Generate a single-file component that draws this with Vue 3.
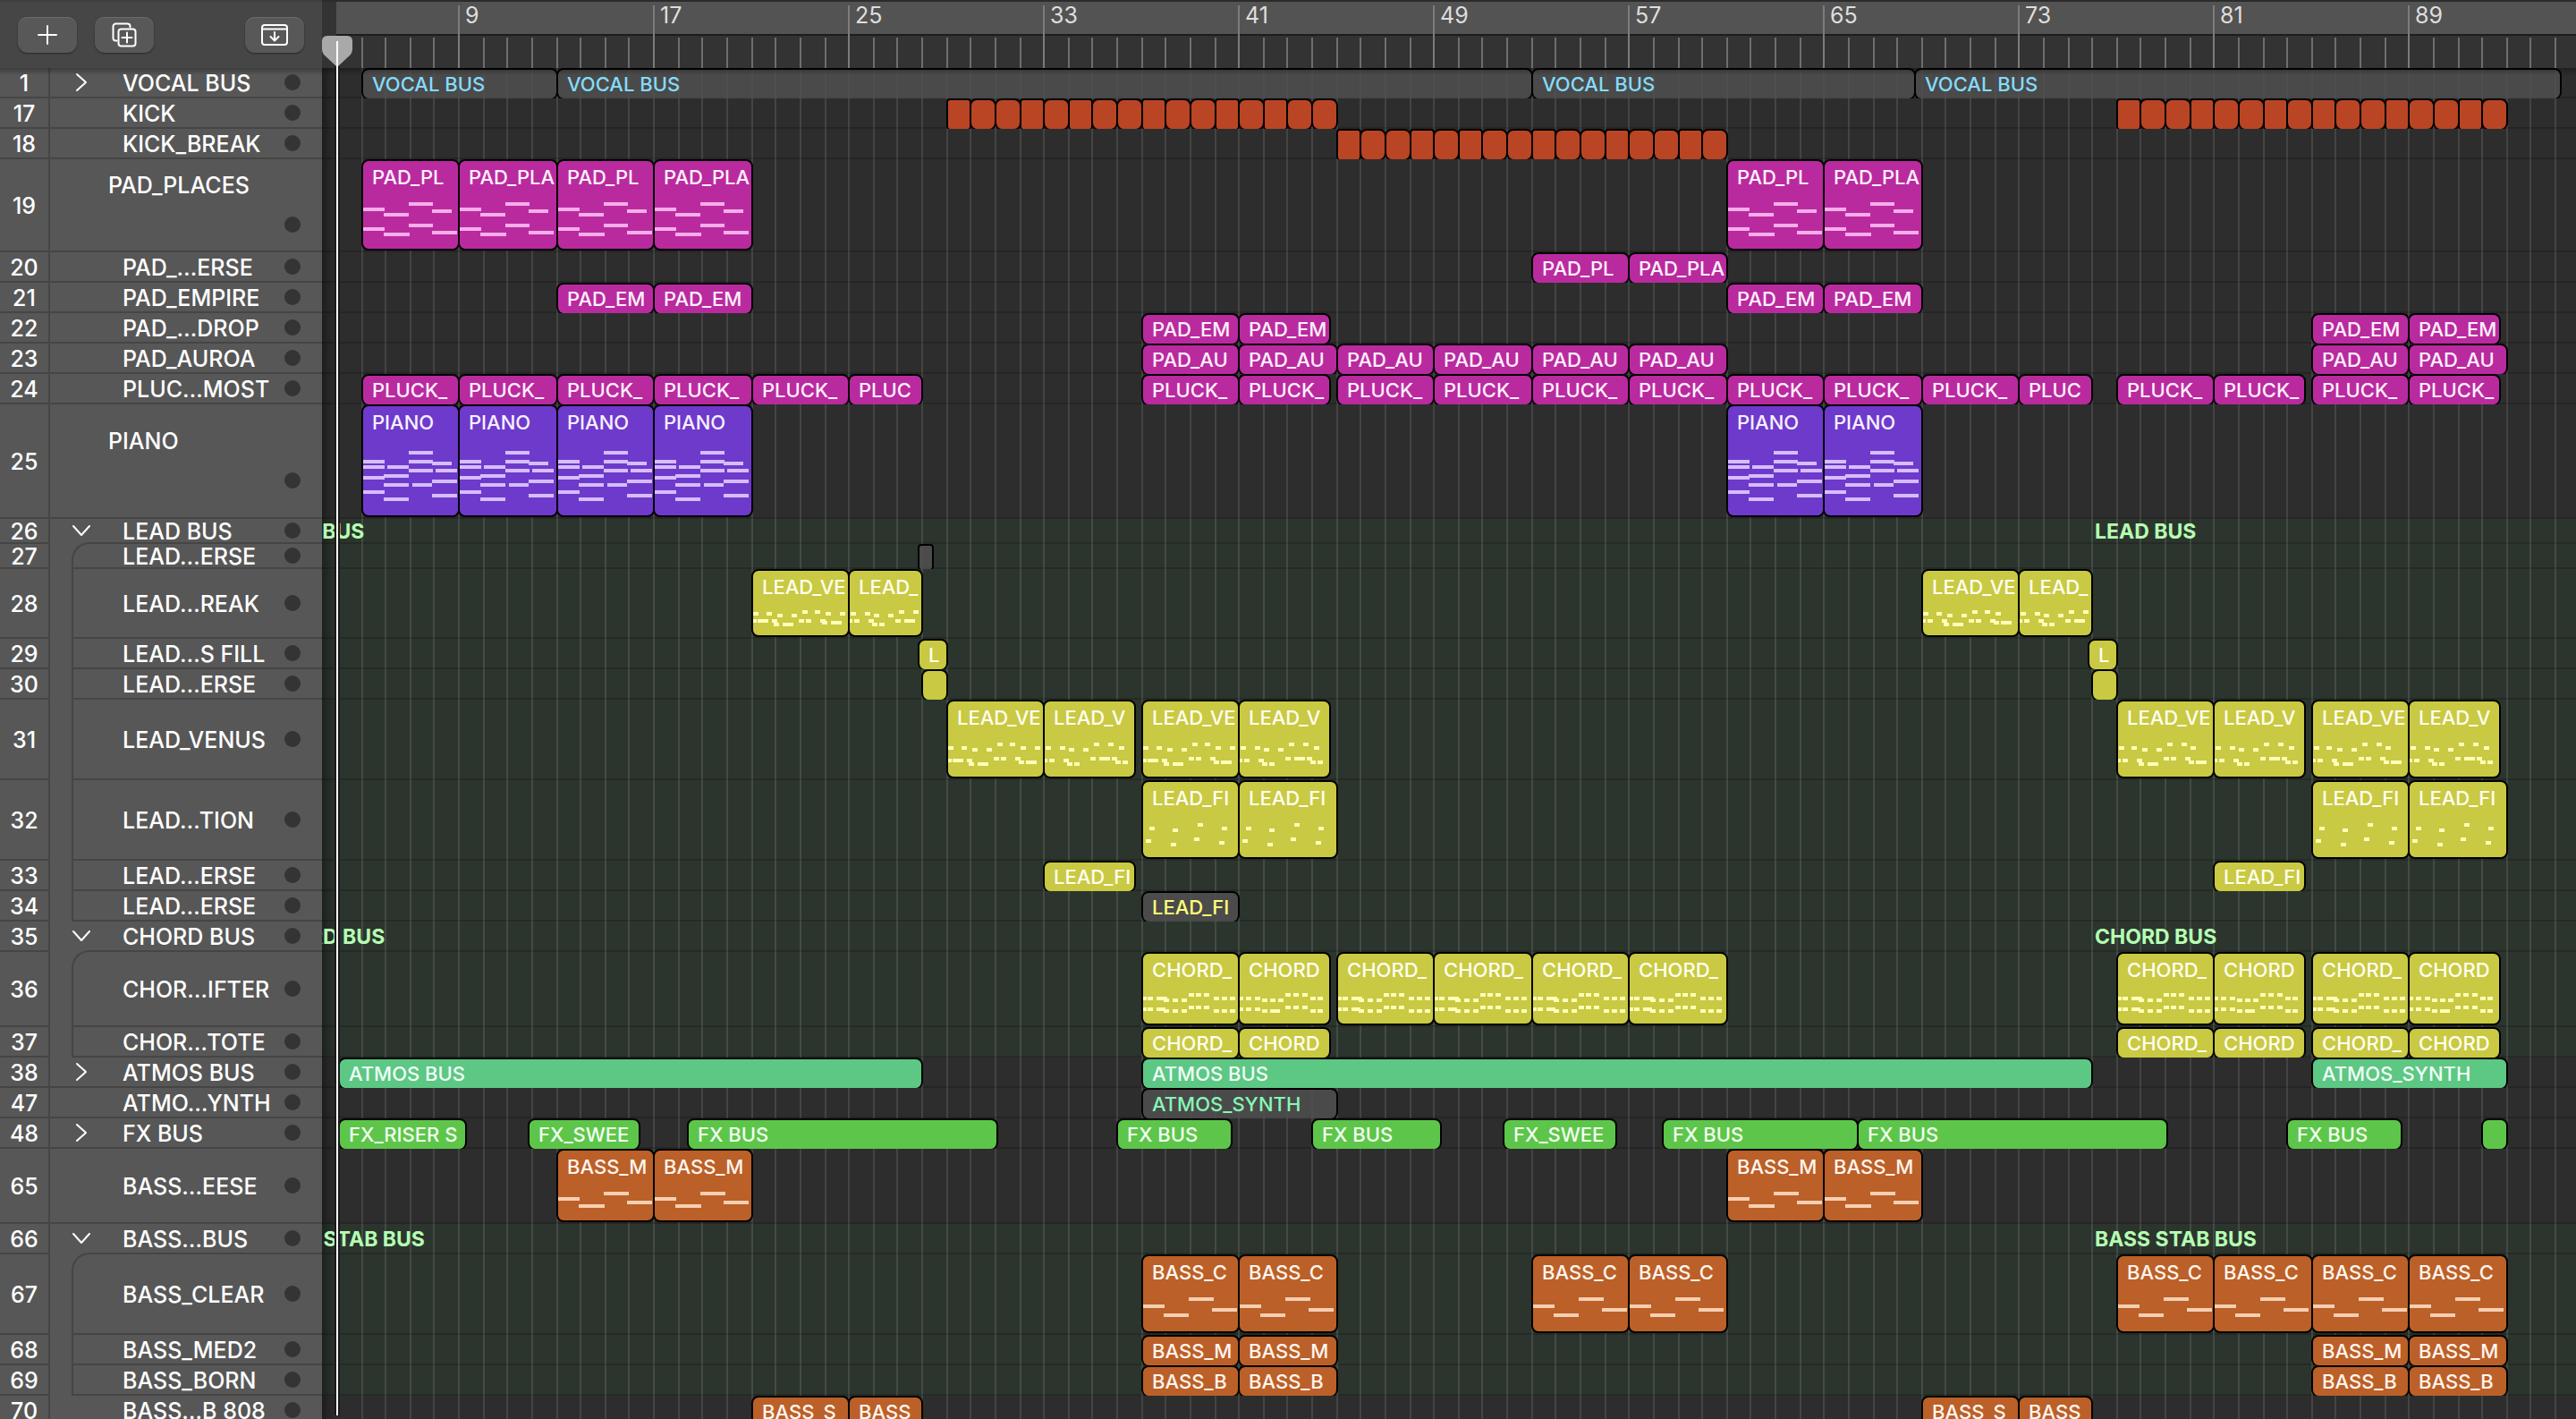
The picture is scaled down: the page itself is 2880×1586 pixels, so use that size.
<template>
  <main class="arrange">
    <header class="top">
      <div class="toolbar">
        <button class="tool" type="button" aria-label="Add track">
          <svg width="22" height="22" viewBox="0 0 22 22">
            <path d="M11 1v20M1 11h20" />
          </svg>
        </button>
        <button class="tool" type="button" aria-label="Duplicate track">
          <svg width="28" height="28" viewBox="0 0 28 28">
            <path d="M5.500 20.500H4.500a3 3 0 0 1-3-3V4.500a3 3 0 0 1 3-3h13a3 3 0 0 1 3 3v1" />
            <rect x="7.500" y="7.500" width="19" height="19" rx="3" />
            <path d="M17 11.500v11M11.500 17h11" />
          </svg>
        </button>
        <button class="tool tool-right" type="button" aria-label="Global tracks">
          <svg width="32" height="26" viewBox="0 0 32 26">
            <rect x="2" y="2" width="28" height="22" rx="3" />
            <path d="M2 6.500h28M16 10v9M11.500 15l4.500 4.500 4.500-4.500" />
          </svg>
        </button>
      </div>

      <div class="ruler">
        <div class="ruler-cycle"></div>
        <div
          v-for="bar in bars"
          :key="bar"
          class="tick"
          :class="{ major: bar % 8 === 1 }"
          :style="{ left: barX(bar) + 'px' }"
        >
          <span v-if="bar % 8 === 1" class="tick-label">{{ bar }}</span>
        </div>
      </div>
    </header>

    <section class="tracks">
      <div
        v-for="t in tracks"
        :key="t.no"
        class="track"
        :class="{ stack: t.stack, child: t.child, first: t.child === 'first' }"
        :style="{ height: t.h + 'px' }"
      >
        <div class="track-header">
          <div class="track-no">{{ t.no }}</div>
          <div class="gutter"></div>
          <div class="track-body" :class="{ large: t.large }">
            <div v-if="!t.large" class="slot">
              <button
                v-if="t.stack || t.folded"
                class="disclosure"
                type="button"
                :aria-label="'Toggle ' + t.name"
              >
                <svg v-if="t.folded" width="14" height="22" viewBox="0 0 14 22">
                  <path d="M2 2l10 9-10 9" />
                </svg>
                <svg v-else width="20" height="14" viewBox="0 0 20 14">
                  <path d="M1 2l9 10 9-10" />
                </svg>
              </button>
            </div>
            <span class="track-name">{{ t.name }}</span>
            <span class="dot"></span>
          </div>
        </div>

        <div class="lane" :class="{ green: t.stack || t.child }">
          <template v-if="t.stack">
            <span
              v-for="x in labelXs"
              :key="x"
              class="stack-label"
              :style="{ left: x + 'px' }"
            >{{ t.label }}</span>
          </template>
          <div
            v-for="(r, i) in t.regions || []"
            :key="i"
            class="region"
            :class="[r.color || t.color, {
              tall: t.h > 40,
              narrow: barX(r.to) - barX(r.from) < 28,
            }]"
            :style="{
              left: barX(r.from) + 'px',
              width: barX(r.to) - barX(r.from) + 2 + 'px',
            }"
          >
            <span class="region-name">{{ r.name }}</span>
            <svg v-if="r.notes" class="notes">
              <g transform="translate(-2 -2)">
                <rect
                  v-for="(n, k) in r.notes"
                  :key="k"
                  :x="n[0]"
                  :y="n[1]"
                  :width="n[2] || 6"
                  height="4"
                />
              </g>
            </svg>
          </div>
        </div>
      </div>

      <div class="grid">
        <i v-for="bar in bars" :key="bar" :style="{ left: barX(bar) + 'px' }"></i>
      </div>
    </section>

    <div class="playhead">
      <svg width="34" height="36" viewBox="0 0 34 36">
        <path d="M0 6q0-6 6-6h22q6 0 6 6v9q0 3-2 6L17 35 2 21q-2-3-2-6z" />
      </svg>
      <div class="playhead-line"></div>
    </div>
  </main>
</template>

<script setup>
// horizontal zoom, in points per bar (one point = two pixels)
const ZOOM = 13.628

function barX(bar) {
  return 2 * Math.round(76.1 + (bar - 9) * ZOOM)
}

const bars = Array.from({ length: 92 }, (_, i) => i + 5)
const labelXs = [-66, 1982]

// note previews: [x, y, width]
const padNotes = [
  [2, 54, 24], [25, 60, 28], [53, 48, 27], [79, 56, 22],
  [2, 76, 24], [25, 82, 29], [53, 72, 27], [79, 80, 28],
]
const pianoNotes = [
  [53, 52, 27], [2, 62, 24], [53, 62, 27], [79, 64, 22],
  [2, 68, 24], [29, 68, 24], [53, 72, 27], [83, 72, 24],
  [25, 78, 28], [2, 80, 24], [79, 84, 28], [25, 88, 28],
  [57, 88, 22], [2, 96, 24], [79, 100, 28], [25, 104, 28],
]
const breakA = [
  [2, 48], [17, 48], [83, 48], [99, 48], [29, 50], [45, 50], [57, 46], [71, 46],
  [2, 56, 4], [7, 56, 12], [23, 56], [53, 56], [61, 56], [77, 56],
  [79, 58], [89, 58, 12], [25, 60], [35, 60, 12],
]
const breakB = [
  [3, 48], [19, 48], [29, 50], [45, 50], [57, 46], [73, 46],
  [2, 56, 3], [7, 56], [23, 56], [53, 56], [63, 56, 12], [27, 60], [35, 60],
]
const breakC = [
  [2, 48], [17, 48], [83, 48], [29, 50], [45, 50], [57, 46], [71, 46],
  [2, 56, 3], [7, 56], [23, 56], [53, 56], [61, 56], [77, 56],
  [81, 58], [89, 58, 12], [25, 60], [35, 60, 12],
]
const venusA = [
  [2, 52], [17, 52], [83, 52], [99, 52], [29, 54], [45, 54], [57, 48], [71, 48],
  [2, 66, 4], [7, 66, 12], [23, 66], [53, 64], [61, 64], [77, 64],
  [81, 68], [89, 68, 12], [25, 70], [35, 70, 12],
]
const venusB = [
  [3, 52], [19, 52], [85, 52], [29, 54], [45, 54], [57, 48], [73, 48],
  [2, 66, 3], [7, 66], [23, 66], [53, 64], [63, 64, 12], [77, 64],
  [81, 68], [89, 68], [27, 70], [35, 70],
]
const venusC = [
  [3, 52], [17, 52], [83, 52], [29, 54], [45, 54], [57, 48], [73, 48],
  [2, 66, 3], [7, 66], [23, 66], [53, 64], [61, 64], [77, 64],
  [81, 68], [89, 68, 12], [25, 70], [35, 70, 12],
]
const fillNotes = [
  [9, 52], [35, 54], [63, 48], [90, 52], [5, 66], [33, 70], [59, 64], [87, 68],
]
const chordA = [
  [2, 50, 4], [7, 50], [17, 50, 12], [25, 52], [35, 52], [45, 52],
  [53, 46], [61, 46], [70, 46], [81, 50], [90, 50], [99, 50],
  [2, 62, 4], [7, 62], [17, 62, 10], [25, 64], [35, 64], [45, 64],
  [53, 60], [61, 60], [70, 60], [81, 64], [90, 64], [99, 64],
]
const chordB = [
  [2, 50, 4], [9, 50], [19, 50], [27, 52], [36, 52], [45, 52],
  [53, 46], [62, 46], [72, 46], [81, 50], [89, 50],
  [2, 62, 4], [9, 62], [19, 62], [27, 64], [36, 64, 11],
  [53, 60], [62, 60], [72, 60], [81, 64], [89, 64],
]
const cheeseNotes = [[2, 54, 24], [25, 62, 29], [53, 48, 28], [79, 58, 28]]
const clearNotes = [[2, 56, 24], [25, 66, 28], [53, 48, 28], [79, 60, 28]]

function region(from, to, name = "", notes = null, color = "") {
  return { from, to, name, notes, color }
}

// same region repeated every four bars; names and notes cycle
function run(from, to, names, notes = null) {
  const list = []
  for (let bar = from, i = 0; bar < to; bar += 4, i++) {
    const end = Math.min(bar + 4, to)
    const name = Array.isArray(names) ? names[i % names.length] : names
    const set = Array.isArray(notes?.[0]?.[0]) ? notes[i % notes.length] : notes
    list.push(region(bar, end, name, set))
  }
  return list
}

function hits(from, to) {
  return Array.from({ length: to - from }, (_, i) => region(from + i, from + i + 1))
}

const padNames = ["PAD_PL", "PAD_PLA"]
const chordNames = ["CHORD_", "CHORD"]

const tracks = [
  { no: 1, name: "VOCAL BUS", h: 34, folded: true, color: "muted blue", regions: [
    region(5, 13, "VOCAL BUS"), region(13, 53, "VOCAL BUS"),
    region(53, 68.75, "VOCAL BUS"), region(68.75, 95.2, "VOCAL BUS"),
  ] },
  { no: 17, name: "KICK", h: 34, color: "red", regions: [...hits(29, 45), ...hits(77, 93)] },
  { no: 18, name: "KICK_BREAK", h: 34, color: "red", regions: hits(45, 61) },
  { no: 19, name: "PAD_PLACES", h: 104, large: true, color: "magenta", regions: [
    ...run(5, 21, padNames, padNotes), ...run(61, 69, padNames, padNotes),
  ] },
  { no: 20, name: "PAD_…ERSE", h: 34, color: "magenta", regions: run(53, 61, padNames) },
  { no: 21, name: "PAD_EMPIRE", h: 34, color: "magenta", regions: [
    ...run(13, 21, "PAD_EM"), ...run(61, 69, "PAD_EM"),
  ] },
  { no: 22, name: "PAD_…DROP", h: 34, color: "magenta", regions: [
    ...run(37, 44.75, "PAD_EM"), ...run(85, 92.75, "PAD_EM"),
  ] },
  { no: 23, name: "PAD_AUROA", h: 34, color: "magenta", regions: [
    ...run(37, 61, "PAD_AU"), ...run(85, 93, "PAD_AU"),
  ] },
  { no: 24, name: "PLUC…MOST", h: 34, color: "magenta", regions: [
    ...run(5, 25, "PLUCK_"), region(25, 28, "PLUC"),
    ...run(37, 44.75, "PLUCK_"), ...run(45, 73, "PLUCK_"), region(73, 76, "PLUC"),
    ...run(77, 84.75, "PLUCK_"), ...run(85, 92.75, "PLUCK_"),
  ] },
  { no: 25, name: "PIANO", h: 128, large: true, color: "purple", regions: [
    ...run(5, 21, "PIANO", pianoNotes), ...run(61, 69, "PIANO", pianoNotes),
  ] },
  { no: 26, name: "LEAD BUS", h: 28, stack: true, label: "LEAD BUS" },
  { no: 27, name: "LEAD…ERSE", h: 28, child: "first", color: "muted", regions: [
    region(27.85, 28.45),
  ] },
  { no: 28, name: "LEAD…REAK", h: 78, child: true, color: "yellow", regions: [
    region(21, 25, "LEAD_VE", breakA), region(25, 28, "LEAD_", breakB),
    region(69, 73, "LEAD_VE", breakC), region(73, 76, "LEAD_", breakB),
  ] },
  { no: 29, name: "LEAD…S FILL", h: 34, child: true, color: "yellow", regions: [
    region(27.85, 29, "L"), region(75.85, 77, "L"),
  ] },
  { no: 30, name: "LEAD…ERSE", h: 34, child: true, color: "yellow", regions: [
    region(28, 29), region(76, 77),
  ] },
  { no: 31, name: "LEAD_VENUS", h: 90, child: true, color: "yellow", regions: [
    ...run(29, 36.75, ["LEAD_VE", "LEAD_V"], [venusA, venusB]),
    ...run(37, 44.75, ["LEAD_VE", "LEAD_V"], [venusA, venusB]),
    ...run(77, 84.75, ["LEAD_VE", "LEAD_V"], [venusC, venusB]),
    ...run(85, 92.75, ["LEAD_VE", "LEAD_V"], [venusC, venusB]),
  ] },
  { no: 32, name: "LEAD…TION", h: 90, child: true, color: "yellow", regions: [
    ...run(37, 45, "LEAD_FI", fillNotes), ...run(85, 93, "LEAD_FI", fillNotes),
  ] },
  { no: 33, name: "LEAD…ERSE", h: 34, child: true, color: "yellow", regions: [
    region(33, 36.75, "LEAD_FI"), region(81, 84.75, "LEAD_FI"),
  ] },
  { no: 34, name: "LEAD…ERSE", h: 34, child: true, color: "muted lemon", regions: [
    region(37, 41, "LEAD_FI"),
  ] },
  { no: 35, name: "CHORD BUS", h: 34, stack: true, label: "CHORD BUS" },
  { no: 36, name: "CHOR…IFTER", h: 84, child: "first", color: "yellow", regions: [
    ...run(37, 44.75, chordNames, [chordA, chordB]),
    ...run(45, 61, "CHORD_", chordA),
    ...run(77, 84.75, chordNames, [chordA, chordB]),
    ...run(85, 92.75, chordNames, [chordA, chordB]),
  ] },
  { no: 37, name: "CHOR…TOTE", h: 34, child: true, color: "yellow", regions: [
    ...run(37, 44.75, chordNames), ...run(77, 84.75, chordNames),
    ...run(85, 92.75, chordNames),
  ] },
  { no: 38, name: "ATMOS BUS", h: 34, folded: true, color: "teal", regions: [
    region(4.1, 28, "ATMOS BUS"), region(37, 76, "ATMOS BUS"),
    region(85, 93, "ATMOS_SYNTH"),
  ] },
  { no: 47, name: "ATMO…YNTH", h: 34, color: "muted mint", regions: [
    region(37, 45, "ATMOS_SYNTH"),
  ] },
  { no: 48, name: "FX BUS", h: 34, folded: true, color: "lime", regions: [
    region(4.1, 9.3, "FX_RISER S"), region(11.87, 16.4, "FX_SWEE"),
    region(18.4, 31.05, "FX BUS"), region(36, 40.7, "FX BUS"),
    region(44, 49.3, "FX BUS"), region(51.87, 56.5, "FX_SWEE"),
    region(58.4, 66.4, "FX BUS"), region(66.4, 79.1, "FX BUS"),
    region(84, 88.65, "FX BUS"), region(92, 93),
  ] },
  { no: 65, name: "BASS…EESE", h: 84, color: "brown", regions: [
    ...run(13, 21, "BASS_M", cheeseNotes), ...run(61, 69, "BASS_M", cheeseNotes),
  ] },
  { no: 66, name: "BASS…BUS", h: 34, stack: true, label: "BASS STAB BUS" },
  { no: 67, name: "BASS_CLEAR", h: 90, child: "first", color: "brown", regions: [
    ...run(37, 45, "BASS_C", clearNotes), ...run(53, 61, "BASS_C", clearNotes),
    ...run(77, 93, "BASS_C", clearNotes),
  ] },
  { no: 68, name: "BASS_MED2", h: 34, child: true, color: "brown", regions: [
    ...run(37, 45, "BASS_M"), ...run(85, 93, "BASS_M"),
  ] },
  { no: 69, name: "BASS_BORN", h: 34, child: true, color: "brown", regions: [
    ...run(37, 45, "BASS_B"), ...run(85, 93, "BASS_B"),
  ] },
  { no: 70, name: "BASS…B 808", h: 34, color: "brown", regions: [
    region(21, 25, "BASS_S"), region(25, 28, "BASS"),
    region(69, 73, "BASS_S"), region(73, 76, "BASS"),
  ] },
]
</script>

<style>
body {
  margin: 0;
  background: #2d2d2d;
}
</style>

<style scoped>
.arrange,
.arrange * {
  box-sizing: border-box;
}

.arrange {
  --side: 360px;
  --line: #454545;
  position: relative;
  height: 100vh;
  overflow: hidden;
  background: #2d2d2d;
  color: #fff;
  font-family: Inter, "Liberation Sans", sans-serif;
  font-size: 25px;
  font-weight: 500;
}

/* toolbar + ruler */
.top {
  position: relative;
  display: flex;
  height: 76px;
}
.top::after {
  content: "";
  position: absolute;
  top: 100%;
  left: 0;
  right: 0;
  height: 8px;
  z-index: 3;
  background: linear-gradient(rgba(0, 0, 0, 0.3), rgba(0, 0, 0, 0));
}

.toolbar {
  width: var(--side);
  flex-shrink: 0;
  display: flex;
  align-items: center;
  gap: 20px;
  padding: 0 20px;
  background: #464646;
  border-top: 2px solid #3e3e3e;
}

.tool {
  width: 66px;
  height: 40px;
  padding: 0;
  border: 0;
  border-radius: 11px;
  background: #585858;
  box-shadow: inset 0 1px 0 #6c6c6c, 0 1px 2px rgba(0, 0, 0, 0.45);
  display: flex;
  align-items: center;
  justify-content: center;
}
.tool-right {
  margin-left: auto;
}
.tool svg,
.disclosure svg {
  fill: none;
  stroke: #fff;
  stroke-width: 2;
  stroke-linecap: round;
  stroke-linejoin: round;
}

.ruler {
  position: relative;
  flex: 1;
  overflow: hidden;
  background: #333;
  border-top: 2px solid #2b2b2b;
}
.ruler-cycle {
  height: 38px;
  margin-left: 16px;
  background: #535353;
  border-bottom: 2px solid #1d1d1d;
}
.tick {
  position: absolute;
  top: 40px;
  bottom: 0;
  width: 2px;
  background: #6e6e6e;
}
.tick.major {
  top: 4px;
  background: #7c7c7c;
}
.tick-label {
  position: absolute;
  top: -4px;
  left: 8px;
  line-height: 30px;
  font-weight: 400;
  color: #dedede;
}

/* track rows */
.tracks {
  position: relative;
}
.track {
  display: flex;
}
.track-header {
  width: var(--side);
  flex-shrink: 0;
  display: flex;
  background: #575757;
}
.track-no {
  width: 56px;
  padding-top: 2px;
  display: flex;
  align-items: center;
  justify-content: center;
  line-height: 24px;
  border-right: 2px solid var(--line);
  border-bottom: 2px solid var(--line);
}
.gutter {
  width: 24px;
  border-bottom: 2px solid var(--line);
}
.track-body {
  flex: 1;
  display: flex;
  align-items: center;
  padding-right: 24px;
  border-left: 2px solid transparent;
  border-bottom: 2px solid var(--line);
}
.track:not(.child) .track-body {
  border-left: 0;
  padding-left: 2px;
}
.track.child .gutter {
  border-bottom: 0;
}
.track.child .track-body {
  border-left-color: var(--line);
}
.track.stack .gutter,
.track.stack .track-body {
  border-bottom-color: transparent;
}
.track.first .track-body {
  margin-top: -2px;
  border-top: 2px solid var(--line);
  border-top-left-radius: 20px;
}

.slot {
  width: 55px;
  display: flex;
}
.disclosure {
  width: 18px;
  height: 24px;
  padding: 0;
  border: 0;
  background: none;
  display: flex;
  align-items: center;
  justify-content: center;
}
.disclosure svg {
  flex-shrink: 0;
}
.track-name {
  flex: 1;
  padding-top: 2px;
  line-height: 30px;
  white-space: nowrap;
}
.dot {
  width: 18px;
  height: 18px;
  flex-shrink: 0;
  border-radius: 50%;
  background: #343434;
}

.track-body.large {
  flex-direction: column;
  justify-content: center;
  align-items: flex-end;
  gap: 20px;
  padding-bottom: 8px;
}
.track-body.large .track-name {
  flex: none;
  width: 215px;
}

/* lanes */
.lane {
  position: relative;
  flex: 1;
  overflow: hidden;
  background: #2d2d2d;
  box-shadow: inset 0 -2px 0 #252525;
}
.lane.green {
  background: #2c352d;
  box-shadow: inset 0 -2px 0 #242b25;
}

.grid {
  position: absolute;
  top: 0;
  bottom: 0;
  left: var(--side);
  right: 0;
  z-index: 1;
  overflow: hidden;
  background: linear-gradient(90deg, rgba(0, 0, 0, 0.35), rgba(0, 0, 0, 0) 16px);
}
.grid i {
  position: absolute;
  top: 0;
  bottom: 0;
  width: 2px;
  background: rgba(255, 255, 255, 0.11);
}

.stack-label {
  position: absolute;
  top: 2px;
  bottom: 2px;
  z-index: 2;
  display: flex;
  align-items: center;
  font-size: 23px;
  font-weight: 700;
  color: #b5ffb3;
  white-space: nowrap;
}

.region {
  position: absolute;
  top: 0;
  bottom: -1px;
  z-index: 2;
  overflow: hidden;
  padding-left: 10px;
  border: 2px solid #000;
  border-bottom-width: 1px;
  border-radius: 8px;
  font-size: 22px;
  line-height: 32px;
  white-space: nowrap;
}
.region.tall {
  bottom: 2px;
  padding-top: 2px;
  border-bottom-width: 2px;
}
.region.narrow {
  border-radius: 4px;
}

.notes {
  position: absolute;
  top: 0;
  left: 0;
  width: 100%;
  height: 100%;
}

.red {
  background: #b94525;
}
.magenta {
  background: #b92a9f;
  color: #fff0fc;
}
.magenta .notes {
  fill: #f5aee8;
}
.purple {
  background: #6e3acb;
  color: #f6f0ff;
}
.purple .notes {
  fill: #d6bdfc;
}
.yellow {
  background: #c9c943;
  color: #fffff0;
}
.yellow .notes {
  fill: #ffffb8;
}
.teal {
  background: #5dc784;
  color: #f0fff6;
}
.lime {
  background: #5dc64a;
  color: #f2fff0;
}
.brown {
  background: #bb6028;
  color: #fff5ee;
}
.brown .notes {
  fill: #f6cfb2;
}
.muted {
  background: rgba(80, 80, 80, 0.82);
}
.blue {
  color: #84dcfb;
}
.lemon {
  color: #ffff78;
}
.mint {
  color: #86f7b6;
}

/* playhead sits over ruler and lanes */
.playhead {
  position: absolute;
  top: 40px;
  bottom: 4px;
  left: var(--side);
  z-index: 5;
  width: 34px;
}
.playhead svg {
  display: block;
  fill: #a9a9a9;
}
.playhead-line {
  position: absolute;
  top: 6px;
  bottom: 0;
  left: 16px;
  width: 2px;
  background: #fff;
}
.playhead::before {
  content: "";
  position: absolute;
  top: 34px;
  bottom: 0;
  left: 14px;
  width: 6px;
  background: #1b1b1b;
}
</style>
